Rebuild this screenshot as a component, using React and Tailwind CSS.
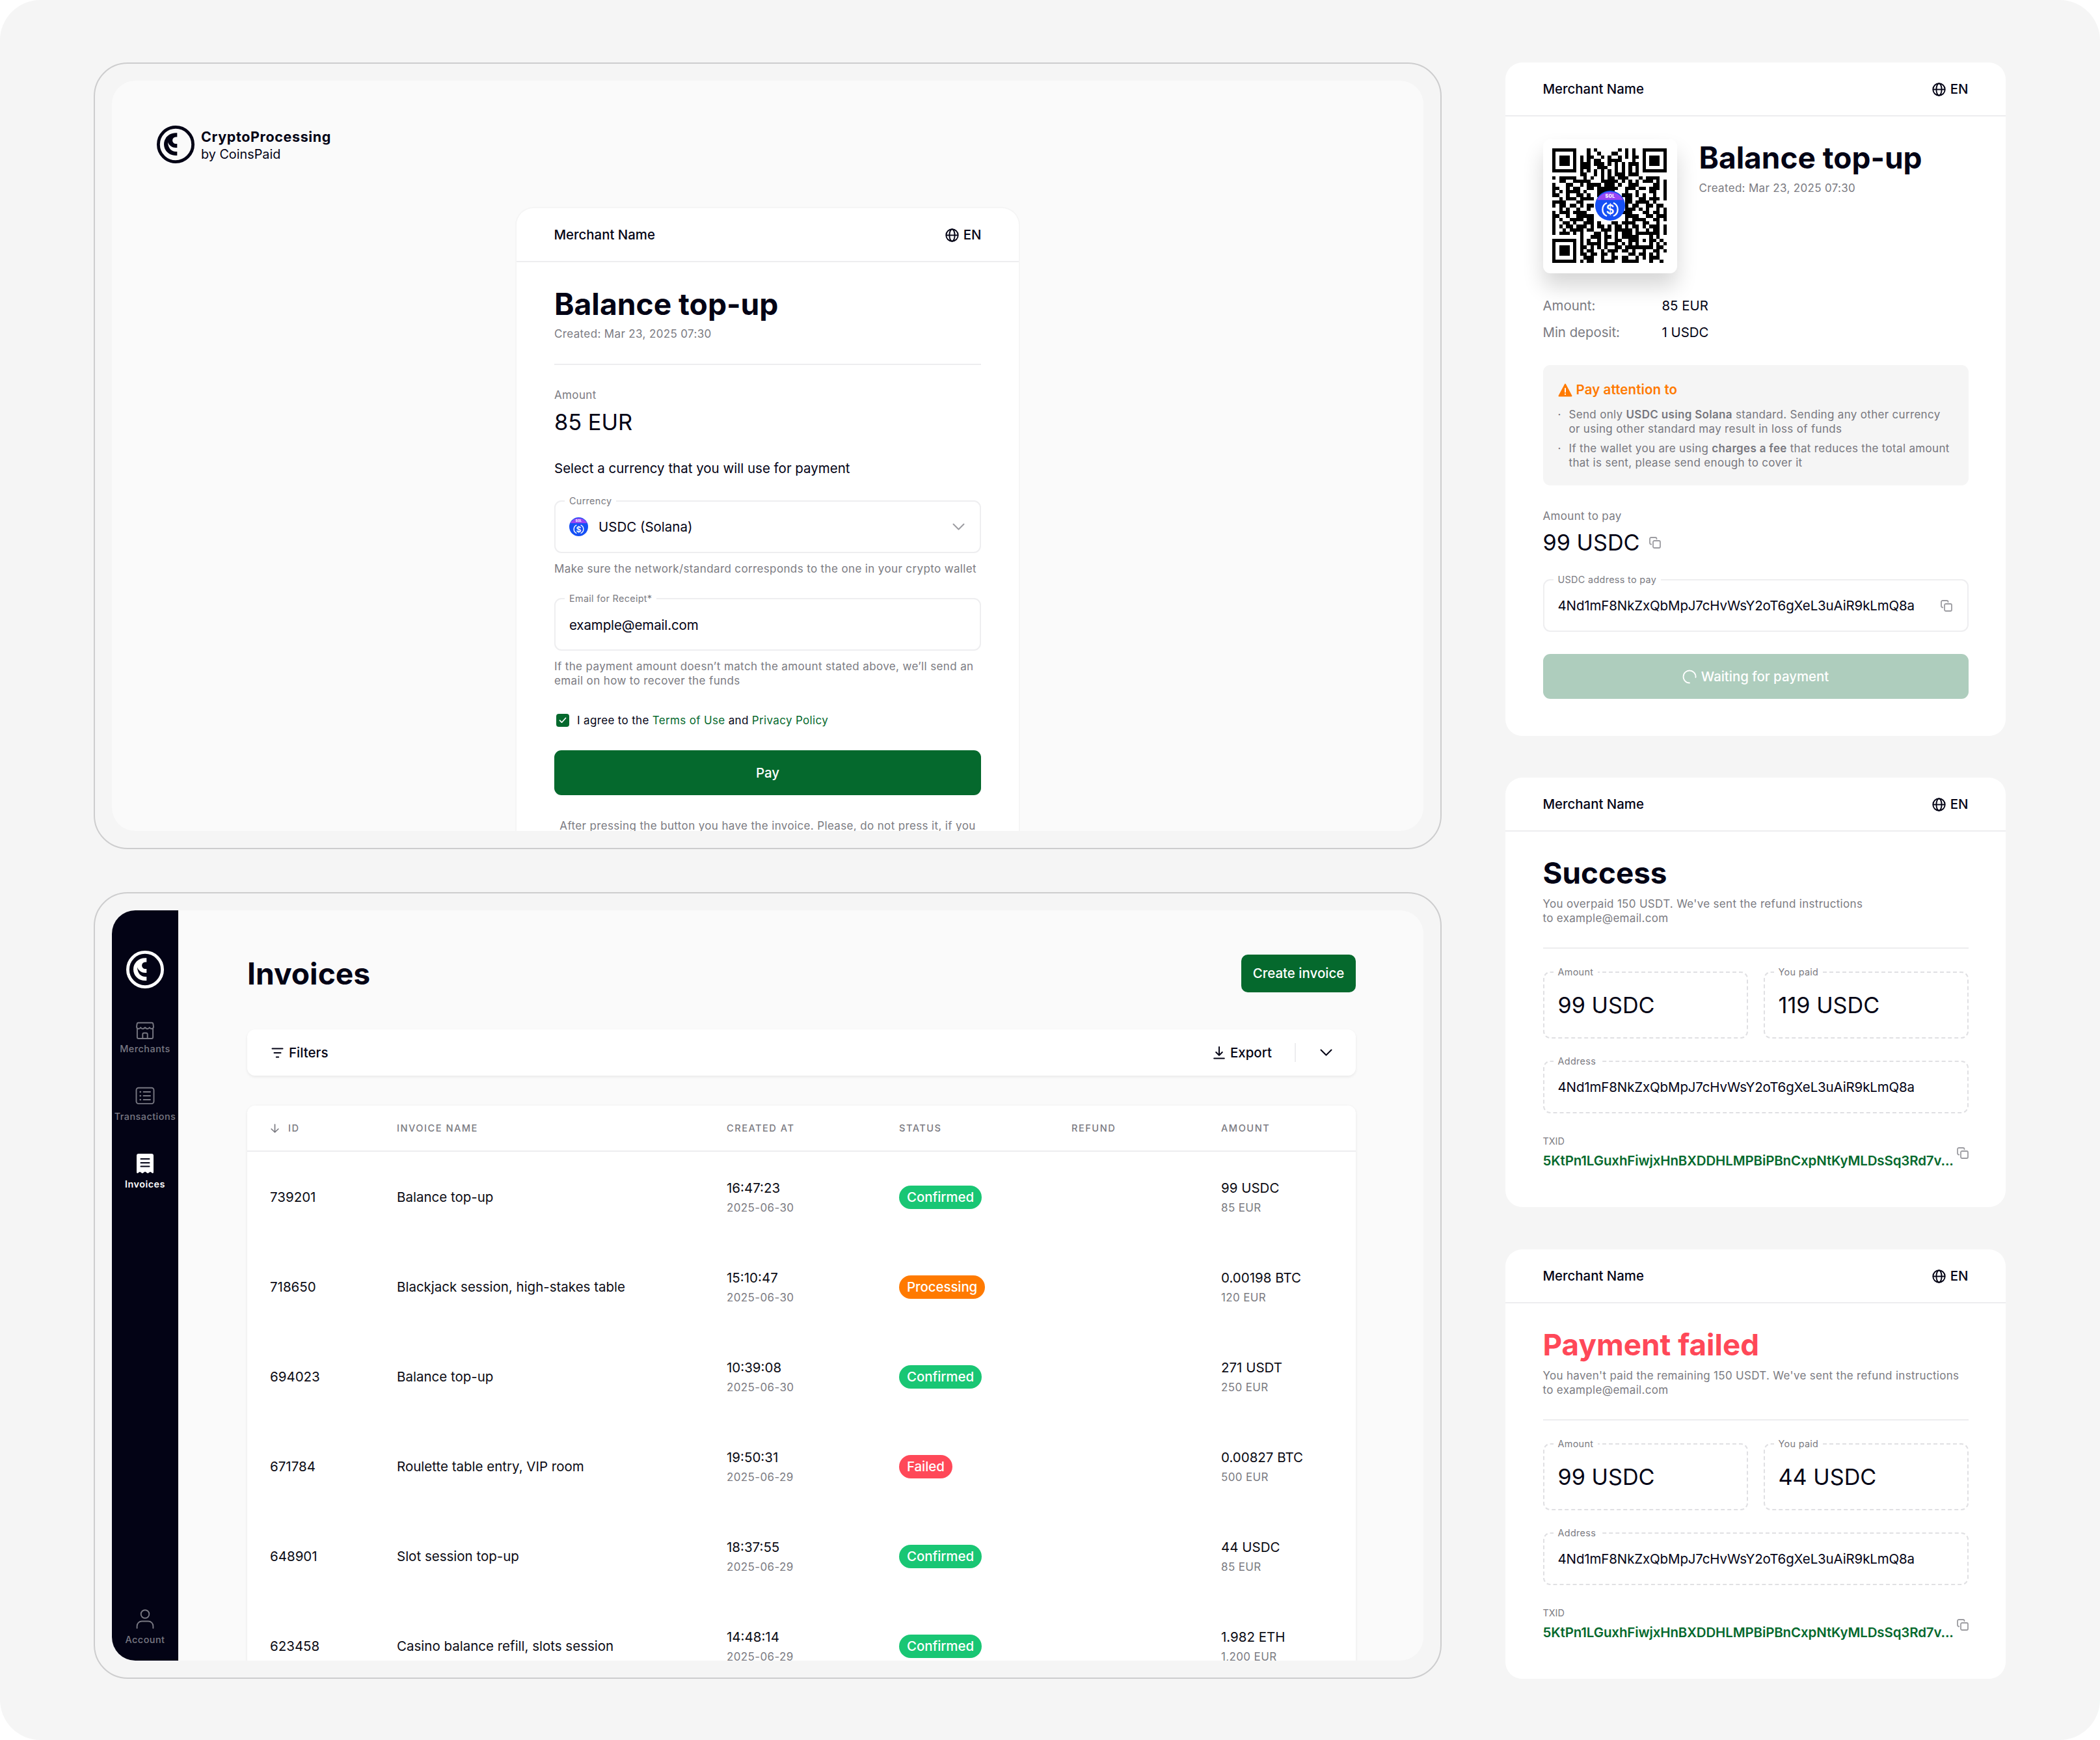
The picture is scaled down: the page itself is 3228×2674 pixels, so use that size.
import React from "react";

const ADDRESS = "4Nd1mF8NkZxQbMpJ7cHvWsY2oT6gXeL3uAiR9kLmQ8a";
const TXID = "5KtPn1LGuxhFiwjxHnBXDDHLMPBiPBnCxpNtKyMLDsSq3Rd7v...";

const qrRows = [
  "#######...#.#......#.#.#..#######",
  "#.....#...#..#...##..#.#..#.....#",
  "#.###.#.#.##..#.#..#.#.##.#.###.#",
  "#.###.#.#.#.##..####...#..#.###.#",
  "#.###.#.###.###.#.#.#.###.#.###.#",
  "#.....#.###..###..#.#.#.#.#.....#",
  "#######.#.#.#.#.#.#.#.#.#.#######",
  "........##..#.#.#.###.###........",
  "#.#####..#.#..#.##.###...#.####..",
  "..##..#####...#####.#.#.#.###.#.#",
  "#...##..#.####.###.#..###....##.#",
  "##..#.##..##.######..###.##.###.#",
  "#.#.####.#...#####...#..#...##..#",
  "##..#..##.#..##.##..###.#.#..#..#",
  "..#.###.####.........##..##.###.#",
  "####...##............##.####.#...",
  "#.##.##.#.##.........#.##..##.##.",
  "..#.#..#..#..........###.#.#..#.#",
  "#.###.####..........###...##.##.#",
  "##..#..#####.........####..##.###",
  "#.#..####.##.........#.####..##.#",
  "#..##.#..###.#...##.####..##..#..",
  "#.#.##.###.#.##.#.##.#.##.#.###.#",
  "#..#.####.##..###.#####.#..#.##.#",
  "#.###.#.#...##.#..#.###.#######.#",
  "........#..###.##.#.#####...#.#..",
  "#######.#.#..#.#..##..###.#.##.#.",
  "#.....#.#.####.####.#.#.#...#.#.#",
  "#.###.#.##.#.#.#..##.########.##.",
  "#.###.#.#.##..#.###.##.#..#..##.#",
  "#.###.#.##.##.##.#....##.##.#.#..",
  "#.....#..###..#..##.##..#.#.###..",
  "#######.#.##..####..#####...#..#.",
];

const invoices = [
  { id: "739201", name: "Balance top-up", time: "16:47:23", date: "2025-06-30", status: "Confirmed", amount: "99 USDC", fiat: "85 EUR" },
  { id: "718650", name: "Blackjack session, high-stakes table", time: "15:10:47", date: "2025-06-30", status: "Processing", amount: "0.00198 BTC", fiat: "120 EUR" },
  { id: "694023", name: "Balance top-up", time: "10:39:08", date: "2025-06-30", status: "Confirmed", amount: "271 USDT", fiat: "250 EUR" },
  { id: "671784", name: "Roulette table entry, VIP room", time: "19:50:31", date: "2025-06-29", status: "Failed", amount: "0.00827 BTC", fiat: "500 EUR" },
  { id: "648901", name: "Slot session top-up", time: "18:37:55", date: "2025-06-29", status: "Confirmed", amount: "44 USDC", fiat: "85 EUR" },
  { id: "623458", name: "Casino balance refill, slots session", time: "14:48:14", date: "2025-06-29", status: "Confirmed", amount: "1.982 ETH", fiat: "1,200 EUR" },
];

const statusColors = {
  Confirmed: "bg-[#19c674]",
  Processing: "bg-[#ff7a00]",
  Failed: "bg-[#ff4858]",
};

/* Icons */

const LogoMark = ({ className }) => (
  <svg width="58" height="58" viewBox="0 0 58 58" fill="none" className={className}>
    <circle cx="29" cy="29" r="26.6" stroke="currentColor" strokeWidth="4.8" />
    <path
      d="M31.3 11.3h-2C18.8 11.3 11 19 11 28.7S18.8 46 29.3 46h2v-6h-2C22.5 40 17.3 34.5 17 25.5c2.2 5.5 6.8 8.5 12 8.5h2.3v-6h-2a5.2 5.2 0 0 1 0-10.4h2z"
      fill="currentColor"
    />
  </svg>
);

const GlobeIcon = () => (
  <svg width="21" height="21" viewBox="0 0 21 21" fill="none" stroke="currentColor" strokeWidth="1.9">
    <circle cx="10.5" cy="10.5" r="9.2" />
    <ellipse cx="10.5" cy="10.5" rx="4.1" ry="9.2" />
    <path d="M1.3 10.5h18.4" />
  </svg>
);

const CopyIcon = ({ className }) => (
  <svg width="18" height="18" viewBox="0 0 18 18" fill="none" stroke="#9c9ca1" strokeWidth="1.8" strokeLinecap="round" className={className}>
    <rect x="6" y="6" width="11" height="11" rx="2" />
    <path d="M3.3 11.5H3a2 2 0 0 1-2-2V3a2 2 0 0 1 2-2h6.5a2 2 0 0 1 2 2v.3" />
  </svg>
);

const ChevronDown = ({ className }) => (
  <svg width="19" height="11" viewBox="0 0 19 11" fill="none" stroke="currentColor" strokeWidth="2" strokeLinecap="round" strokeLinejoin="round" className={className}>
    <path d="M1.5 1.5l8 8 8-8" />
  </svg>
);

const WarningIcon = () => (
  <svg width="22" height="21" viewBox="0 0 22 21">
    <path d="M11 1.500L20.600 19.500H1.400z" fill="#ff7a00" stroke="#ff7a00" strokeWidth="1.8" strokeLinejoin="round" />
    <path d="M11 8v5.500M11 16.500v.500" stroke="#ffffff" strokeWidth="2" strokeLinecap="round" />
  </svg>
);

const SpinnerIcon = () => (
  <svg width="22" height="22" viewBox="0 0 22 22" fill="none" stroke="#ffffff" strokeWidth="1.8" strokeLinecap="round">
    <path d="M11 20.5A9.5 9.5 0 1 1 20.5 12" />
  </svg>
);

const FilterIcon = () => (
  <svg width="19" height="16" viewBox="0 0 19 16" fill="none" stroke="currentColor" strokeWidth="2" strokeLinecap="round">
    <path d="M1.5 1.5h16M4.500 8h10M7.800 14.500h3.400" />
  </svg>
);

const ExportIcon = () => (
  <svg width="18" height="20" viewBox="0 0 18 20" fill="none" stroke="currentColor" strokeWidth="2" strokeLinecap="round" strokeLinejoin="round">
    <path d="M9 1v12.500M4.200 9L9 13.700 13.800 9M1.200 18.500h15.600" />
  </svg>
);

const SortIcon = () => (
  <svg width="13" height="14" viewBox="0 0 13 14" fill="none" stroke="currentColor" strokeWidth="1.7" strokeLinecap="round" strokeLinejoin="round">
    <path d="M6.500 1v12M1.200 8l5.300 5 5.300-5" />
  </svg>
);

const MerchantsIcon = () => (
  <svg width="30" height="30" viewBox="0 0 30 30" fill="none" stroke="currentColor" strokeWidth="1.9" strokeLinejoin="round">
    <path d="M4.5 2.7h21c1 0 1.6.5 1.8 1.5l.7 4.6c0 2-1.3 3.2-3 3.2-1.6 0-2.5-.9-3.2-2-.9 1.5-2 2-3.2 2-1.4 0-2.5-.8-3.600-2-1.100 1.200-2.200 2-3.600 2-1.200 0-2.300-.5-3.200-2-.7 1.100-1.600 2-3.200 2-1.700 0-3-1.200-3-3.200l.7-4.600c.2-1 .8-1.500 1.800-1.500z" />
    <path d="M2.900 11.500V25a2 2 0 0 0 2 2h20.200a2 2 0 0 0 2-2V11.500" />
    <path d="M11.300 27v-6.500a2 2 0 0 1 2-2h3.400a2 2 0 0 1 2 2V27" />
  </svg>
);

const TransactionsIcon = () => (
  <svg width="30" height="30" viewBox="0 0 30 30" fill="none" stroke="currentColor" strokeWidth="1.9" strokeLinecap="round">
    <rect x="1.5" y="2.7" width="27" height="24.4" rx="3.5" />
    <path d="M12.5 9h10.5M12.5 15h10.5M12.5 21h10.5" />
    <path d="M7.7 9h.2M7.7 15h.2M7.7 21h.2" strokeWidth="2.6" />
  </svg>
);

const InvoicesIcon = () => (
  <svg width="30" height="30" viewBox="0 0 30 30">
    <path
      d="M5 0h20a3 3 0 0 1 3 3v25.6c0 1-1 1.6-1.9 1.1l-3.1-1.9-3.1 1.9c-.5.3-1 .3-1.500 0L15 27.400l-3.400 2.300c-.5.3-1 .3-1.500 0L7 27.800l-3.100 1.900c-.9.5-1.900-.1-1.900-1.100V3a3 3 0 0 1 3-3z"
      fill="currentColor"
    />
    <path d="M8.5 8h13M8.5 14h13M8.5 19.6h13" stroke="#030315" strokeWidth="2" strokeLinecap="round" />
  </svg>
);

const AccountIcon = () => (
  <svg width="30" height="30" viewBox="0 0 30 30" fill="none" stroke="currentColor" strokeWidth="1.9" strokeLinecap="round">
    <circle cx="15" cy="7.5" r="6.3" />
    <path d="M2.6 29v-3a7.5 7.5 0 0 1 7.5-7.500h9.800a7.500 7.500 0 0 1 7.500 7.500v3" />
  </svg>
);

const UsdcCoin = ({ size, className }) => (
  <svg width={size} height={size} viewBox="0 0 46 46" className={className}>
    <circle cx="23" cy="23" r="23" fill="#1650f5" />
    <path d="M2.7 14.2a23 23 0 0 1 40.6 0z" fill="#9747f5" />
    <text x="23" y="11.3" textAnchor="middle" fontSize="7" fontWeight="800" fill="#ffffff" letterSpacing="0.3">SOL</text>
    <path d="M18 18.8a11 11 0 0 0 0 20.2M28 18.8a11 11 0 0 1 0 20.2" fill="none" stroke="#ffffff" strokeWidth="2.3" />
    <text x="23" y="36" textAnchor="middle" fontSize="19.5" fontWeight="600" fill="#ffffff">$</text>
  </svg>
);

const QrCode = () => (
  <svg width="176" height="176" viewBox="0 0 33 33" shapeRendering="crispEdges">
    {qrRows.map((row, y) =>
      row.split("").map((cell, x) =>
        cell === "#" ? <rect key={`${x}-${y}`} x={x} y={y} width="1" height="1" fill="#000000" /> : null
      )
    )}
  </svg>
);

/* Shared pieces */

const CardHeader = () => (
  <div className="flex h-[83px] items-center justify-between border-b-2 border-[#ededef] px-[57.5px] pt-[2px] text-[20.4px] font-medium">
    <span>Merchant Name</span>
    <span className="flex items-center gap-[7px]">
      <GlobeIcon />
      EN
    </span>
  </div>
);

const Title = ({ children, className = "text-[46.2px]" }) => (
  <h1 className={`leading-[56px] font-bold ${className}`}>{children}</h1>
);

const Small = ({ children, className = "tracking-[0.36px]" }) => (
  <p className={`text-[17px] leading-[22px] text-[#7b7b82] ${className}`}>{children}</p>
);

const Field = ({ label, dashed, children, className = "" }) => (
  <div
    className={`relative flex items-center rounded-[11px] border-2 px-[21px] ${
      dashed ? "border-dashed border-[#e0e0e3]" : "border-[#eeeef0]"
    } ${className}`}
  >
    <span className="absolute -top-[10px] left-[14px] bg-white px-[7px] text-[14.4px] leading-[18px] tracking-[0.32px] text-[#7b7b82]">
      {label}
    </span>
    {children}
  </div>
);

/* Checkout */

const CheckoutScreen = () => (
  <div className="h-[1209px] rounded-[52px] border-2 border-[#cdcdce] p-[26px]">
    <div className="h-[1153px] overflow-hidden rounded-[36px] bg-[#fafafa] pt-[69px]">
      <div className="flex h-[58px] items-center gap-[10px] pl-[69px]">
        <LogoMark />
        <div className="pt-[3px]">
          <p className="text-[21.5px] leading-[27px] font-bold tracking-[0.62px]">CryptoProcessing</p>
          <p className="text-[19.8px] leading-[27px]">by CoinsPaid</p>
        </div>
      </div>

      <div className="mx-auto mt-[69px] h-[1100px] w-[772px] rounded-t-[26px] bg-white shadow-[0_0_0_2px_#f5f5f5]">
        <CardHeader />
        <div className="px-[58px] pt-9">
          <Title>Balance top-up</Title>
          <Small className="mt-[7px] tracking-[0.36px]">Created: Mar 23, 2025 07:30</Small>
          <div className="mt-[35px] h-[2px] bg-[#ededef]" />
          <Small className="mt-[35px] tracking-[0.36px]">Amount</Small>
          <p className="mt-[10px] text-[34.4px] leading-[42px]">85 EUR</p>
          <p className="mt-[38px] text-[20.5px] leading-6">Select a currency that you will use for payment</p>

          <Field label="Currency" className="mt-[37px] h-[81px]">
            <UsdcCoin size={29} />
            <span className="ml-4 pt-[2px] text-[20.5px]">USDC (Solana)</span>
            <ChevronDown className="mr-[2px] ml-auto text-[#9c9ca1]" />
          </Field>
          <Small className="mt-[13px] tracking-[0.37px] whitespace-nowrap">
            Make sure the network/standard corresponds to the one in your crypto wallet
          </Small>

          <Field label="Email for Receipt*" className="mt-[34px] h-[81px]">
            <span className="pt-[3px] text-[20.5px] tracking-[-0.12px]">example@email.com</span>
          </Field>
          <Small className="mt-[13px] tracking-[0.37px] whitespace-nowrap">
            If the payment amount doesn’t match the amount stated above, we’ll send an
            <br />
            email on how to recover the funds
          </Small>

          <div className="mt-[39px] flex items-center pl-[3px]">
            <span className="flex size-5 items-center justify-center rounded-[4px] bg-[#05692d]">
              <svg width="12" height="10" viewBox="0 0 12 10" fill="none" stroke="#ffffff" strokeWidth="1.7" strokeLinecap="round" strokeLinejoin="round">
                <path d="M1.5 5.2l3 3 6-6.700" />
              </svg>
            </span>
            <p className="ml-3 text-[17px] leading-[22px] tracking-[0.34px]">
              I agree to the <span className="text-[#05692d]">Terms of Use</span> and{" "}
              <span className="text-[#05692d]">Privacy Policy</span>
            </p>
          </div>

          <button className="mt-[35px] flex h-[69px] w-full items-center justify-center rounded-[11px] bg-[#05692d] pt-[2px] text-[20.5px] font-medium text-white">
            Pay
          </button>
          <Small className="mt-9 text-center tracking-[0.36px] whitespace-nowrap">
            After pressing the button you have the invoice. Please, do not press it, if you
          </Small>
        </div>
      </div>
    </div>
  </div>
);

/* Dashboard */

const NavItem = ({ icon, label, active, className }) => (
  <div className={`flex flex-col items-center ${active ? "text-white" : "text-[#787882]"} ${className}`}>
    {icon}
    <span
      className={`text-[14.4px] leading-[18px] tracking-[0.48px] ${active ? "font-semibold" : "font-medium"} ${
        label === "Merchants" ? "mt-1" : "mt-2"
      }`}
    >
      {label}
    </span>
  </div>
);

const Sidebar = () => (
  <aside className="flex w-[102px] shrink-0 flex-col items-center bg-[#030315] pt-[62px] pb-[23px]">
    <LogoMark className="text-white" />
    <NavItem icon={<MerchantsIcon />} label="Merchants" className="mt-[50px]" />
    <NavItem icon={<TransactionsIcon />} label="Transactions" className="mt-12" />
    <NavItem icon={<InvoicesIcon />} label="Invoices" active className="mt-12" />
    <NavItem icon={<AccountIcon />} label="Account" className="mt-auto" />
  </aside>
);

const gridCols = "grid grid-cols-[195px_507px_265px_265px_230px_1fr] pl-[35px]";

const InvoiceTable = () => (
  <div className="mt-[46px] h-[1000px] rounded-t-[12px] bg-white shadow-[0_1px_4px_rgba(0,0,0,0.08)]">
    <div className={`${gridCols} h-[71px] items-center border-b-2 border-[#ededef] pt-[2px] text-[14.6px] font-medium tracking-[1.5px] text-[#7b7b82]`}>
      <span className="flex items-center gap-[14px] pl-[1px]">
        <SortIcon />
        ID
      </span>
      <span>INVOICE NAME</span>
      <span>CREATED AT</span>
      <span>STATUS</span>
      <span>REFUND</span>
      <span>AMOUNT</span>
    </div>
    <div className="pt-px">
      {invoices.map((item) => (
        <div key={item.id} className={`${gridCols} h-[138px] items-center text-[20.5px] text-[#0b0b14]`}>
          <span>{item.id}</span>
          <span>{item.name}</span>
          <div className="pt-[2px] leading-[30px]">
            <p>{item.time}</p>
            <p className="text-[17px] tracking-[0.36px] text-[#7b7b82]">{item.date}</p>
          </div>
          <div>
            <span className={`inline-flex h-9 items-center rounded-full px-[12px] pt-px font-medium tracking-[-0.1px] text-white ${statusColors[item.status]}`}>
              {item.status}
            </span>
          </div>
          <span />
          <div className="pt-[2px] leading-[30px]">
            <p>{item.amount}</p>
            <p className="text-[17px] tracking-[0.36px] text-[#7b7b82]">{item.fiat}</p>
          </div>
        </div>
      ))}
    </div>
  </div>
);

const DashboardScreen = () => (
  <div className="mt-[66px] h-[1209px] rounded-[52px] border-2 border-[#cdcdce] p-[26px]">
    <div className="flex h-[1153px] overflow-hidden rounded-[36px] bg-[#fafafa]">
      <Sidebar />
      <main className="flex-1 pt-[68px] pr-[104px] pl-[106px]">
        <div className="flex h-[58px] items-center justify-between">
          <Title>Invoices</Title>
          <button className="h-[58px] w-[176px] rounded-[10px] bg-[#05692d] pt-px text-[20.5px] font-medium text-white">
            Create invoice
          </button>
        </div>

        <div className="mt-[57px] flex h-[71px] items-center rounded-[12px] bg-white pr-[36px] pl-[37px] text-[20.5px] font-medium shadow-[0_2px_4px_rgba(0,0,0,0.07)]">
          <FilterIcon />
          <span className="ml-[8px] pt-[2px]">Filters</span>
          <span className="ml-auto flex items-center gap-[8px]">
            <ExportIcon />
            <span className="pt-[2px]">Export</span>
          </span>
          <span className="mr-[37px] ml-[35px] h-[29px] w-[2px] bg-[#ededef]" />
          <ChevronDown />
        </div>

        <InvoiceTable />
      </main>
    </div>
  </div>
);

/* Payment cards */

const WaitingCard = () => (
  <div className="h-[1035px] rounded-[26px] bg-white">
    <CardHeader />
    <div className="px-[57.5px] pt-[35px]">
      <div className="flex gap-[34px]">
        <div className="relative size-[206px] shrink-0 rounded-[11px] bg-white pt-[14px] pl-[14.5px] shadow-[0_20px_32px_rgba(0,0,0,0.16)]">
          <QrCode />
          <UsdcCoin size={46} className="absolute top-[79px] left-[80px]" />
        </div>
        <div>
          <Title className="text-[46px]">Balance top-up</Title>
          <Small className="mt-2 tracking-[0.32px]">Created: Mar 23, 2025 07:30</Small>
        </div>
      </div>

      <dl className="mt-[38px] grid grid-cols-[183px_1fr] gap-y-[17px] text-[20.4px] leading-6">
        <dt className="text-[#7b7b82]">Amount:</dt>
        <dd>85 EUR</dd>
        <dt className="text-[#7b7b82]">Min deposit:</dt>
        <dd>1 USDC</dd>
      </dl>

      <div className="mt-[38px] h-[185px] rounded-[11px] bg-[#f5f5f5] pt-[26px] pl-[23px]">
        <p className="flex items-center gap-[6px] text-[20.5px] leading-6 font-semibold tracking-[0.1px] text-[#ff7a00]">
          <WarningIcon />
          Pay attention to
        </p>
        <ul className="mt-[15px] flex flex-col gap-2 text-[17px] leading-[22px] tracking-[0.32px] whitespace-nowrap text-[#77777e]">
          <li className="flex">
            <span className="w-[17px]">·</span>
            <p>
              Send only <b className="font-semibold">USDC using Solana</b> standard. Sending any other currency
              <br />
              or using other standard may result in loss of funds
            </p>
          </li>
          <li className="flex">
            <span className="w-[17px]">·</span>
            <p>
              If the wallet you are using <b className="font-semibold">charges a fee</b> that reduces the total amount
              <br />
              that is sent, please send enough to cover it
            </p>
          </li>
        </ul>
      </div>

      <Small className="mt-9 tracking-[0.32px]">Amount to pay</Small>
      <div className="mt-2 flex items-center gap-[14px] text-[34.2px] leading-[42px]">
        <span className="pt-px">99 USDC</span>
        <CopyIcon />
      </div>

      <Field label="USDC address to pay" className="mt-[35px] h-[81px]">
        <span className="pt-px text-[20.5px] tracking-[-0.14px]">{ADDRESS}</span>
        <CopyIcon className="mr-[2px] ml-auto" />
      </Field>

      <button className="mt-[34px] flex h-[69px] w-full items-center justify-center gap-[7px] rounded-[11px] bg-[#aecdbd] text-[20.4px] font-medium text-white">
        <SpinnerIcon />
        <span className="pt-px">Waiting for payment</span>
      </button>
    </div>
  </div>
);

const ResultCard = ({ title, titleClass, message, paid, className }) => (
  <div className={`h-[660px] rounded-[26px] bg-white ${className}`}>
    <CardHeader />
    <div className="px-[57.5px] pt-9">
      <Title className={titleClass}>{title}</Title>
      <Small className="mt-2 tracking-[0.31px] whitespace-nowrap">
        {message}
        <br />
        to example@email.com
      </Small>
      <div className="mt-[34px] h-[2px] bg-[#ededef]" />

      <div className="mt-[35px] grid grid-cols-2 gap-6">
        <Field label="Amount" dashed className="h-[103px]">
          <span className="pt-px text-[34.2px]">99 USDC</span>
        </Field>
        <Field label="You paid" dashed className="h-[103px]">
          <span className="pt-px text-[34.2px]">{paid}</span>
        </Field>
      </div>
      <Field label="Address" dashed className="mt-[34px] h-[81px]">
        <span className="pt-[2px] text-[20.5px] tracking-[-0.14px]">{ADDRESS}</span>
      </Field>

      <div className="mt-[34px] flex justify-between">
        <div>
          <p className="text-[14.4px] leading-[18px] text-[#7b7b82]">TXID</p>
          <p className="mt-[9px] text-[20.5px] leading-6 font-semibold tracking-[-0.14px] whitespace-nowrap text-[#05692d]">{TXID}</p>
        </div>
        <CopyIcon className="mt-[18px]" />
      </div>
    </div>
  </div>
);

export default function App() {
  return (
    <div className="h-[2674px] w-[3228px] bg-white font-['Inter',sans-serif] text-[#030315]">
      <div className="flex h-full rounded-[62px] bg-[#f5f5f5] pt-24 pl-[144px]">
        <div className="w-[2072px]">
          <CheckoutScreen />
          <DashboardScreen />
        </div>
        <div className="ml-[98px] w-[769px]">
          <WaitingCard />
          <ResultCard
            className="mt-16"
            title="Success"
            titleClass="text-[45.8px]"
            message="You overpaid 150 USDT. We've sent the refund instructions"
            paid="119 USDC"
          />
          <ResultCard
            className="mt-[65px]"
            title="Payment failed"
            titleClass="text-[45.8px] text-[#ff4858]"
            message="You haven't paid the remaining 150 USDT. We've sent the refund instructions"
            paid="44 USDC"
          />
        </div>
      </div>
    </div>
  );
}
